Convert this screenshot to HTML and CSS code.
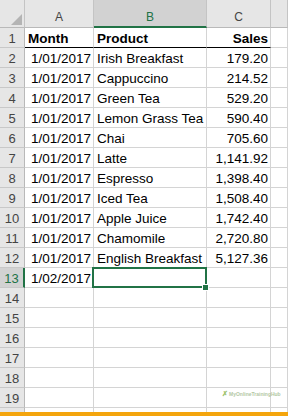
FILE: index.html
```html
<!DOCTYPE html>
<html>

<head>
    <title>Sales by Product</title>
    <link rel="stylesheet" href="styles.css">
</head>

<body>
    <div class="page">
        <div class="sheet">
            <div class="corner"><span class="tri"></span></div><div class="colhead">A</div><div class="colhead sel">B</div><div class="colhead">C</div><div class="colhead"></div>

            <div class="rowhead">1</div><div class="cell hdr">Month</div><div class="cell hdr">Product</div><div class="cell hdr num">Sales</div><div class="cell"></div>
            <div class="rowhead">2</div><div class="cell num">1/01/2017</div><div class="cell">Irish Breakfast</div><div class="cell num">179.20</div><div class="cell"></div>
            <div class="rowhead">3</div><div class="cell num">1/01/2017</div><div class="cell">Cappuccino</div><div class="cell num">214.52</div><div class="cell"></div>
            <div class="rowhead">4</div><div class="cell num">1/01/2017</div><div class="cell">Green Tea</div><div class="cell num">529.20</div><div class="cell"></div>
            <div class="rowhead">5</div><div class="cell num">1/01/2017</div><div class="cell">Lemon Grass Tea</div><div class="cell num">590.40</div><div class="cell"></div>
            <div class="rowhead">6</div><div class="cell num">1/01/2017</div><div class="cell">Chai</div><div class="cell num">705.60</div><div class="cell"></div>
            <div class="rowhead">7</div><div class="cell num">1/01/2017</div><div class="cell">Latte</div><div class="cell num">1,141.92</div><div class="cell"></div>
            <div class="rowhead">8</div><div class="cell num">1/01/2017</div><div class="cell">Espresso</div><div class="cell num">1,398.40</div><div class="cell"></div>
            <div class="rowhead">9</div><div class="cell num">1/01/2017</div><div class="cell">Iced Tea</div><div class="cell num">1,508.40</div><div class="cell"></div>
            <div class="rowhead">10</div><div class="cell num">1/01/2017</div><div class="cell">Apple Juice</div><div class="cell num">1,742.40</div><div class="cell"></div>
            <div class="rowhead">11</div><div class="cell num">1/01/2017</div><div class="cell">Chamomile</div><div class="cell num">2,720.80</div><div class="cell"></div>
            <div class="rowhead">12</div><div class="cell num">1/01/2017</div><div class="cell">English Breakfast</div><div class="cell num">5,127.36</div><div class="cell"></div>
            <div class="rowhead sel">13</div><div class="cell num">1/02/2017</div><div class="cell active"><span class="handle"></span></div><div class="cell"></div><div class="cell"></div>
            <div class="rowhead">14</div><div class="cell"></div><div class="cell"></div><div class="cell"></div><div class="cell"></div>
            <div class="rowhead">15</div><div class="cell"></div><div class="cell"></div><div class="cell"></div><div class="cell"></div>
            <div class="rowhead">16</div><div class="cell"></div><div class="cell"></div><div class="cell"></div><div class="cell"></div>
            <div class="rowhead">17</div><div class="cell"></div><div class="cell"></div><div class="cell"></div><div class="cell"></div>
            <div class="rowhead">18</div><div class="cell"></div><div class="cell"></div><div class="cell"></div><div class="cell"></div>
            <div class="rowhead">19</div><div class="cell"></div><div class="cell"></div><div class="cell"></div><div class="cell"></div>
            <div class="rowhead"></div><div class="cell"></div><div class="cell"></div><div class="cell"></div><div class="cell"></div>
        </div>
        <div class="bar"></div>

        <div class="mark"><span class="x">&#10007;</span>MyOnlineTrainingHub</div>
    </div>
</body>

</html>
```

FILE: styles.css
```css
html, body {
    margin: 0;
    padding: 0;
    background-color: #ffffff;
}

.page {
    position: relative;
    width: 288px;
    height: 416px;
    overflow: hidden;
    font-family: "Liberation Sans", Arial, sans-serif;
}

.sheet {
    display: grid;
    grid-template-columns: 25px 69px 113px 64px 17px;
    grid-template-rows: 28px;
    grid-auto-rows: 20px;
    height: 412px;
    overflow: hidden;
}

.sheet > div {
    box-sizing: border-box;
    white-space: nowrap;
    overflow: hidden;
}

/* headers */
.corner, .colhead, .rowhead {
    background-color: #e6e6e6;
    color: #444444;
}

.corner {
    position: relative;
    border-right: 1px solid #c4c4c4;
    border-bottom: 1px solid #b9b9b9;
}

.tri {
    position: absolute;
    right: 2px;
    bottom: 2px;
    width: 0;
    height: 0;
    border-left: 11px solid transparent;
    border-bottom: 11px solid #b4b4b4;
}

.colhead {
    border-right: 1px solid #c4c4c4;
    border-bottom: 1px solid #b9b9b9;
    text-align: center;
    font-size: 12px;
    line-height: 14px;
    padding-top: 10px;
}

.colhead.sel {
    background-color: #d2d2d2;
    color: #217346;
    border-bottom: 2px solid #217346;
}

.rowhead {
    border-right: 1px solid #b9b9b9;
    border-bottom: 1px solid #c8c8c8;
    text-align: center;
    font-size: 13px;
    line-height: 17px;
    padding-top: 2px;
}

.rowhead.sel {
    background-color: #d2d2d2;
    color: #217346;
    border-right: 2px solid #217346;
}

/* cells */
.cell {
    border-right: 1px solid #d4d4d4;
    border-bottom: 1px solid #d4d4d4;
    padding: 2px 2px 0 3px;
    font-size: 13.5px;
    line-height: 17px;
    color: #000000;
}

.num {
    text-align: right;
    padding-right: 2px;
}

.hdr {
    font-weight: bold;
    border-bottom-color: #000000;
}

.sheet > .cell.active {
    position: relative;
    overflow: visible;
}

.active::after {
    content: "";
    position: absolute;
    top: -1px;
    left: -2px;
    right: -1px;
    bottom: -1px;
    border: 2px solid #217346;
}

.handle {
    position: absolute;
    right: -3px;
    bottom: -4px;
    width: 5px;
    height: 5px;
    background-color: #217346;
    border: 1px solid #ffffff;
    z-index: 1;
}

.bar {
    height: 4px;
    background-color: #f4a50d;
}

.mark {
    position: absolute;
    left: 222px;
    top: 390px;
    font-size: 5px;
    line-height: 8px;
    color: #b3c7a4;
    font-weight: bold;
}

.mark .x {
    color: #9cc26a;
    font-size: 7px;
    margin-right: 1px;
}
```
